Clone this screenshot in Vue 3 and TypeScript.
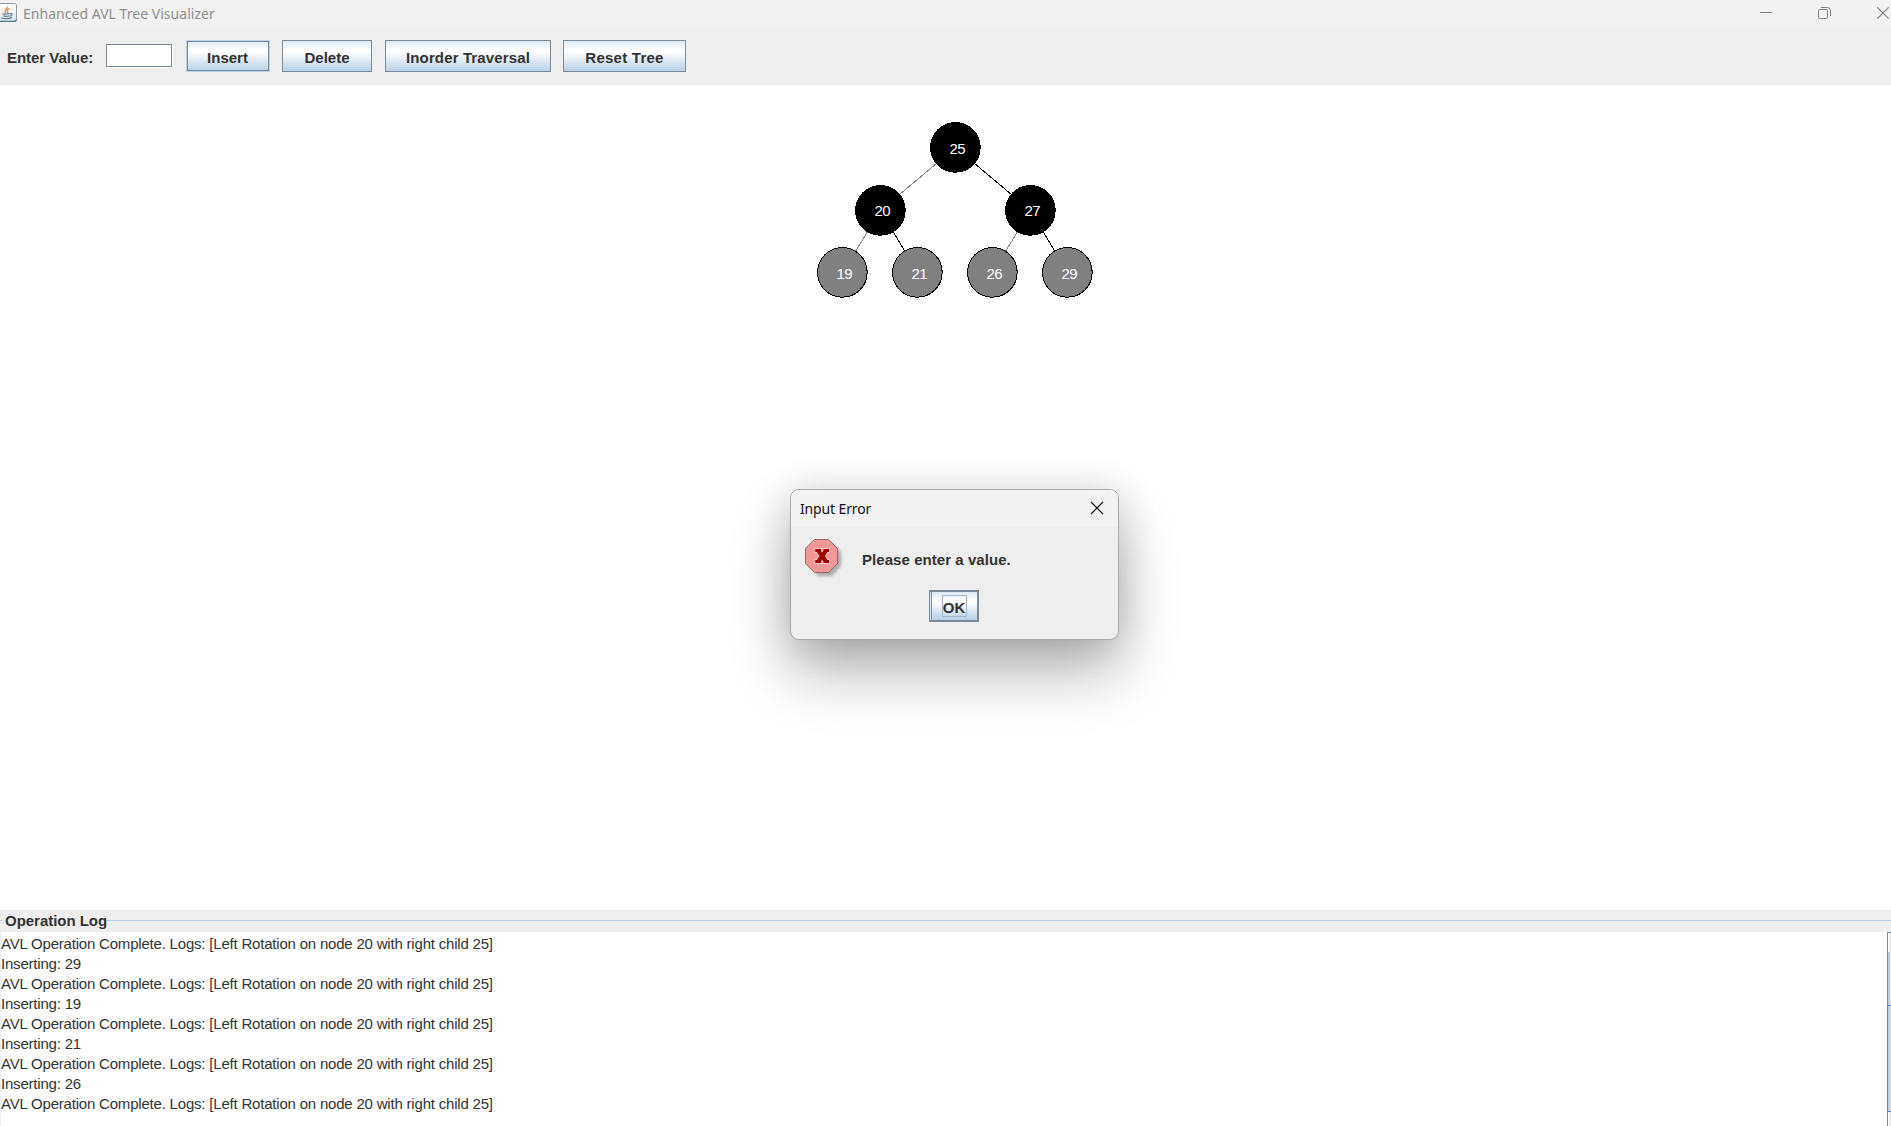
<script setup lang="ts">
interface TreeNode {
  value: number
  x: number
  y: number
  base: number
  leaf: boolean
}

interface Edge {
  from: [number, number]
  to: [number, number]
  color: string
}

const nodes: TreeNode[] = [
  { value: 25, x: 955.4, y: 62.4, base: 69, leaf: false },
  { value: 20, x: 880.4, y: 125.4, base: 131, leaf: false },
  { value: 27, x: 1030.4, y: 125.4, base: 131, leaf: false },
  { value: 19, x: 842.4, y: 187.4, base: 194, leaf: true },
  { value: 21, x: 917.4, y: 187.4, base: 194, leaf: true },
  { value: 26, x: 992.4, y: 187.4, base: 194, leaf: true },
  { value: 29, x: 1067.4, y: 187.4, base: 194, leaf: true },
]

const edges: Edge[] = [
  { from: [955.5, 62.5], to: [880.5, 125.5], color: '#808080' },
  { from: [955.5, 62.5], to: [1030.5, 125.5], color: '#000' },
  { from: [880.5, 125.5], to: [842.5, 187.5], color: '#808080' },
  { from: [880.5, 125.5], to: [917.5, 187.5], color: '#000' },
  { from: [1030.5, 125.5], to: [992.5, 187.5], color: '#808080' },
  { from: [1030.5, 125.5], to: [1067.5, 187.5], color: '#000' },
]

const rotation = 'AVL Operation Complete. Logs: [Left Rotation on node 20 with right child 25]'
const logLines: string[] = [
  rotation,
  'Inserting: 29',
  rotation,
  'Inserting: 19',
  rotation,
  'Inserting: 21',
  rotation,
  'Inserting: 26',
  rotation,
]
</script>

<template>
  <div class="window">
    <header class="titlebar">
      <svg class="java" width="17" height="22" viewBox="0 0 17 22">
        <defs>
          <linearGradient id="jbg" x1="0" y1="0" x2="0" y2="1">
            <stop offset="0" stop-color="#fff" />
            <stop offset="1" stop-color="#dfe5ea" />
          </linearGradient>
        </defs>
        <path d="M-2 3.5H14.5Q16.5 3.5 16.5 5.5V19.5Q16.5 21.5 14.5 21.5H-2Z" fill="url(#jbg)" stroke="#8b9aa8" />
        <path d="M0 21.3H14.5Q16.3 21.3 16.3 19.5" fill="none" stroke="#54738c" stroke-width="1.3" />
        <path d="M7.2 6.5Q8 8 6 9.5Q4 11 6.2 13M9.5 8.6Q6.5 10 7.6 11.4Q8.2 12.3 7.2 13.2" fill="none" stroke="#ee8a35" stroke-width="1.3" />
        <path d="M2.5 13.7Q6 14.8 10 13.5M3 15.8Q6 16.8 9.3 15.7M1 17.8Q6 19.7 12 17.6M10 13.6Q12.8 13.2 12 14.9Q11.4 16 9.8 16.3" fill="none" stroke="#5c8099" stroke-width="1.2" />
      </svg>
      <span class="title">Enhanced AVL Tree Visualizer</span>
      <svg class="controls" width="140" height="28" viewBox="0 0 140 28" fill="none" stroke="#808080">
        <path d="M9 12.5H21" />
        <rect x="67.5" y="9.5" width="9" height="9" rx="1.2" />
        <path d="M70 7.5H76.5Q79.5 7.5 79.5 10.5V16" />
        <path d="M126.3 7.3L137.7 18.7M137.7 7.3L126.3 18.7" stroke-width="1.2" />
      </svg>
    </header>

    <div class="toolbar">
      <label class="label" for="value">Enter Value:</label>
      <input id="value" class="field" type="text" />
      <button class="btn insert"><span>Insert</span></button>
      <button class="btn delete"><span>Delete</span></button>
      <button class="btn inorder"><span>Inorder Traversal</span></button>
      <button class="btn reset"><span>Reset Tree</span></button>
    </div>

    <main class="canvas">
      <svg width="1891" height="825" viewBox="0 0 1891 825">
        <line
          v-for="(e, i) in edges"
          :key="i"
          :x1="e.from[0]"
          :y1="e.from[1]"
          :x2="e.to[0]"
          :y2="e.to[1]"
          :stroke="e.color"
          shape-rendering="crispEdges"
        />
        <g v-for="n in nodes" :key="n.value">
          <circle :cx="n.x" :cy="n.y" r="24.8" :fill="n.leaf ? '#808080' : '#000'" stroke="#000" shape-rendering="crispEdges" />
          <text class="num" :x="n.x - 6" :y="n.base">{{ n.value }}</text>
        </g>
      </svg>
    </main>

    <section class="log">
      <div class="log-head">
        <i class="rule start"></i>
        <span class="log-title">Operation Log</span>
        <i class="rule"></i>
      </div>
      <div class="log-body">
        <div class="lines">
          <div v-for="(line, i) in logLines" :key="i" class="line"><span>{{ line }}</span></div>
        </div>
        <div class="scroll">
          <div class="arrow up"></div>
          <div class="track"></div>
          <div class="thumb"></div>
          <div class="arrow down"></div>
        </div>
      </div>
    </section>

    <div class="dialog" role="alertdialog">
      <div class="dialog-title">
        <span>Input Error</span>
        <svg width="14" height="14" viewBox="0 0 14 14">
          <path d="M1 1L13 13M13 1L1 13" stroke="#111" stroke-width="1.2" />
        </svg>
      </div>
      <div class="dialog-body">
        <svg class="error" width="40" height="42" viewBox="0 0 40 42">
          <defs>
            <filter id="soft" x="-20%" y="-20%" width="140%" height="140%">
              <feGaussianBlur stdDeviation="1.6" />
            </filter>
          </defs>
          <path d="M13 4H27L36 13V27L27 37H13L4 27V13Z" fill="#888" opacity=".65" filter="url(#soft)" />
          <path d="M9.5 .5H23.5L32.5 9.5V24.5L23.5 33.5H9.5L.5 24.5V9.5Z" fill="#f09898" stroke="#a86464" />
          <path
            d="M10.3 10H16V12L17.2 13.5L18.4 12V10H24V13H22.6L19.9 17L22.6 21H24V24H18.4V22.5L17.2 20.8L16 22.5V24H10.3V21H11.8L14.5 17L11.8 13H10.3Z"
            fill="#900"
            stroke="#ffc4c4"
            stroke-width="1.8"
            paint-order="stroke"
          />
        </svg>
        <span class="message">Please enter a value.</span>
      </div>
      <div class="dialog-actions">
        <button class="btn ok"><span>OK</span></button>
      </div>
    </div>
  </div>
</template>

<style>
html,
body {
  margin: 0;
  overflow: hidden;
}
</style>

<style scoped>
.window {
  position: relative;
  display: flex;
  flex-direction: column;
  width: 1891px;
  height: 1126px;
  overflow: hidden;
  background: #fff;
  font-family: 'Liberation Sans', Arial, sans-serif;
  font-size: 15px;
  color: #333;
}
.titlebar {
  display: flex;
  height: 28px;
  flex: none;
  background: #f2f2f2;
}
.java {
  flex: none;
}
.title {
  margin-left: 6px;
  font-family: 'Noto Sans', 'Open Sans', sans-serif;
  font-size: 14px;
  line-height: 28px;
  letter-spacing: 0.03px;
  color: #8f8f8f;
  white-space: nowrap;
}
.controls {
  margin-left: auto;
}
.toolbar {
  display: flex;
  flex: none;
  box-sizing: border-box;
  height: 57px;
  padding: 12px 0 0 7px;
  background: #eee;
}
.label {
  width: 99px;
  font-weight: bold;
  line-height: 35px;
  letter-spacing: -0.04px;
  white-space: nowrap;
}
.field {
  box-sizing: border-box;
  width: 66px;
  height: 23px;
  margin: 4px 14px 0 0;
  padding: 0 3px;
  border: 1px solid #7a8a99;
  border-radius: 0;
  background: #fff;
  box-shadow: 1px 1px 0 #fff;
  outline: none;
}
.btn {
  display: flex;
  align-items: center;
  justify-content: center;
  box-sizing: border-box;
  height: 32px;
  margin: 0;
  padding: 3px 0 0;
  border: 1px solid #7a8a99;
  border-radius: 0;
  background: linear-gradient(#dde8f3 0%, #fff 30%, #fff 36%, #b8cfe5 100%);
  font: bold 15px 'Liberation Sans', Arial, sans-serif;
  color: #333;
  white-space: nowrap;
}
.insert {
  width: 84px;
  margin-right: 12px;
  padding-right: 1px;
  border-color: #b8cfe5;
  box-shadow: inset 0 0 0 1px #7a8a99;
}
.delete {
  width: 90px;
  margin-right: 13px;
}
.inorder {
  width: 166px;
  margin-right: 12px;
  letter-spacing: 0.13px;
}
.reset {
  width: 123px;
  letter-spacing: 0.25px;
}
.canvas {
  flex: none;
  height: 825px;
  background: #fff;
}
.canvas svg {
  display: block;
}
.num {
  font-size: 15px;
  letter-spacing: -0.6px;
  fill: #fff;
}
.log {
  display: flex;
  flex: 1;
  flex-direction: column;
  background: #eee;
}
.log-head {
  display: flex;
  height: 22px;
}
.rule {
  flex: 1;
  height: 1px;
  margin-top: 10px;
  background: #b8cfe5;
}
.rule.start {
  flex: none;
  width: 2px;
}
.log-title {
  width: 102px;
  margin-left: 3px;
  font-weight: bold;
  line-height: 22px;
  letter-spacing: -0.03px;
  white-space: nowrap;
}
.log-body {
  display: flex;
  flex: 1;
  margin-left: 1px;
  background: #fff;
}
.lines {
  flex: 1;
  padding-top: 2px;
}
.line {
  height: 20px;
  line-height: 20px;
  letter-spacing: -0.2px;
  white-space: nowrap;
}
.scroll {
  display: flex;
  flex-direction: column;
  width: 4px;
}
.scroll > div {
  box-sizing: border-box;
  border-left: 1px solid #7a8a99;
}
.arrow {
  background: linear-gradient(90deg, #fff 1px, #eee 1px);
}
.arrow.up {
  height: 20px;
  border-top: 1px solid #7a8a99;
}
.track {
  height: 53px;
  background: linear-gradient(90deg, #b8cfe5 2px, #e5ecf5 2px);
}
.scroll > .thumb {
  height: 107px;
  border: solid #6382bf;
  border-width: 1px 0 1px 1px;
  background: linear-gradient(90deg, #b8cfe5 2px, #dce6f2 2px);
}
.arrow.down {
  flex: 1;
}
.dialog {
  position: absolute;
  left: 790px;
  top: 489px;
  box-sizing: border-box;
  width: 329px;
  height: 151px;
  overflow: visible;
  border: 1px solid #a9a9a9;
  border-radius: 9px;
  background: #eee;
  box-shadow: 0 32px 60px rgba(0, 0, 0, 0.29), 0 3px 40px rgba(0, 0, 0, 0.14);
}
.dialog-title {
  display: flex;
  align-items: center;
  justify-content: space-between;
  height: 37px;
  padding: 0 14px 0 9px;
  border-radius: 8px 8px 0 0;
  background: #f3f3f3;
  font-family: 'Noto Sans', 'Open Sans', sans-serif;
  font-size: 14px;
  letter-spacing: -0.14px;
  color: #111;
}
.dialog-title svg {
  margin-bottom: 2px;
}
.dialog-body {
  display: flex;
  height: 63px;
  padding-left: 14px;
}
.error {
  margin-top: 12px;
}
.message {
  margin: 24px 0 0 17px;
  font-weight: bold;
  line-height: 18px;
  letter-spacing: 0.06px;
}
.dialog-actions {
  display: flex;
  padding-left: 138px;
}
.ok {
  width: 50px;
  padding: 0 0 0 1px;
  border-width: 2px 2px 2px 1px;
  background: linear-gradient(90deg, #dbe6f1 1px, #7a8a99 1px, #7a8a99 2px, transparent 2px),
    linear-gradient(#dde8f3 0%, #fff 30%, #fff 36%, #b8cfe5 100%);
}
.ok span {
  box-sizing: border-box;
  width: 25px;
  height: 22px;
  border: 1px solid #a3b8cc;
  line-height: 24px;
}
</style>
